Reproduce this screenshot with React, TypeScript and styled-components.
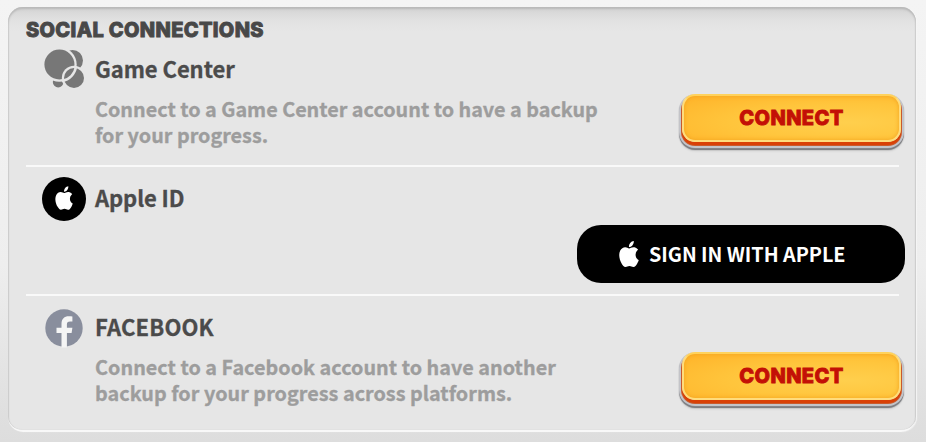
import React from 'react';
import styled, { createGlobalStyle } from 'styled-components';

const GlobalStyle = createGlobalStyle`
  * { box-sizing: border-box; }
  body {
    margin: 0;
    font-family: 'Noto Sans CJK SC', 'Noto Sans', sans-serif;
    font-weight: 700;
  }
`;

const Page = styled.main`
  width: 926px;
  height: 442px;
  padding: 7px 10px 9px 8px;
  background: linear-gradient(#f4f4f4 0%, #eeeeee 60%, #dfdfdf 94%, #dddddd 100%);
`;

const Panel = styled.section`
  display: flex;
  flex-direction: column;
  height: 425px;
  padding: 10px 11px 0 18px;
  border-radius: 15px;
  background: linear-gradient(#d0d0d0 0, #dadada 6px, #e2e2e2 14px, #e6e6e6 24px, #e6e6e6 100%);
  border-bottom: 2px solid #f8f8f8;
  box-shadow: inset 0 2px 2px #b9b9b9, inset 1px 0 1px #d2d2d2, inset -1px 0 1px #d4d4d4, 1px 0 1px #f6f6f6;
`;

const Heading = styled.h1`
  margin: 0;
  height: 27px;
  font: 800 20px/27px Inter, sans-serif;
  letter-spacing: 0.35px;
  color: #484848;
  -webkit-text-stroke: 0.9px #484848;
  white-space: nowrap;
`;

const Row = styled.article<{ $height: number }>`
  display: grid;
  grid-template-columns: 69px 1fr auto;
  grid-template-rows: 51px 1fr;
  height: ${(p) => p.$height}px;

  & + & {
    padding-top: 6px;
    border-top: 2px solid transparent;
    border-image: linear-gradient(90deg, #f9f9f9 0 872px, transparent 872px) 1;
  }
`;

const IconCell = styled.div`
  display: flex;
  align-items: center;
  padding-left: 16px;
  height: 52px;

  svg { display: block; }
`;

const Name = styled.h2<{ $spacing: number }>`
  grid-column: 2 / 4;
  margin: 0;
  font-size: 22px;
  line-height: 49px;
  letter-spacing: ${(p) => p.$spacing}px;
  color: #4b4b4b;
  -webkit-text-stroke: 0.3px #4b4b4b;
  white-space: nowrap;
`;

const Description = styled.p<{ $spacing: number }>`
  grid-column: 2;
  margin: 1px 0 0;
  font-size: 19.8px;
  line-height: 25.5px;
  letter-spacing: ${(p) => p.$spacing}px;
  color: #9d9d9d;
  -webkit-text-stroke: 0.3px #9d9d9d;
  white-space: pre-line;
`;

const ConnectButton = styled.button`
  grid-column: 3;
  width: 219px;
  height: 48px;
  margin: -1px 4px 0 0;
  padding: 0;
  border: 2px solid #ffdc7c;
  border-top-color: #ffd25c;
  border-radius: 13px;
  background: radial-gradient(ellipse at 75% 60%, #ffcf4d 0%, #ffc53c 50%, #ffb329 100%);
  box-shadow: inset 0 0 4px #f2a21f, 0 3px 0 #d94006, 0 3px 0 1px #c95a2b,
    0 3px 0 3px #c3c4c9, 0 5px 0 2px #85868b, 0 5px 1px 3px #77787c, 0 7px 3px 1px #b0b0b0;
  font: 800 20px/44px Inter, sans-serif;
  letter-spacing: 0.4px;
  color: #c31006;
  -webkit-text-stroke: 0.9px #c31006;
`;

const AppleButton = styled.button`
  display: flex;
  align-items: center;
  gap: 8px;
  grid-column: 3;
  width: 328px;
  height: 58px;
  margin: 1px 0 0;
  padding: 0 0 0 40px;
  border: 0;
  border-radius: 24px;
  background: #000;
  font: 700 19.8px/56px 'Noto Sans CJK SC', sans-serif;
  letter-spacing: -0.05px;
  color: #fff;
  white-space: nowrap;
`;

const APPLE_PATH =
  'M12.152 6.896c-.948 0-2.415-1.078-3.96-1.04-2.04.027-3.91 1.183-4.961 3.014-2.117 3.675-.546 9.103 1.519 12.09 1.013 1.454 2.208 3.09 3.792 3.039 1.52-.065 2.09-.987 3.935-.987 1.831 0 2.35.987 3.96.948 1.637-.026 2.676-1.48 3.676-2.948 1.156-1.688 1.636-3.325 1.662-3.415-.039-.013-3.182-1.221-3.22-4.857-.026-3.04 2.48-4.494 2.597-4.559-1.429-2.09-3.623-2.324-4.39-2.376-2-.156-3.675 1.09-4.61 1.09zM15.53 3.83c.843-1.012 1.4-2.427 1.245-3.83-1.207.052-2.662.805-3.532 1.818-.78.896-1.454 2.338-1.273 3.714 1.338.104 2.715-.688 3.559-1.701';

const GameCenterIcon = () => (
  <svg width="44" height="44" viewBox="0 0 44 44">
    <g fill="#777">
      <circle cx="30.5" cy="12.5" r="10.5" />
      <circle cx="16.2" cy="34" r="5.4" />
      <circle cx="17.4" cy="16.5" r="17.3" fill="#e6e6e6" />
      <circle cx="17.4" cy="16.5" r="15" />
      <circle cx="32" cy="30" r="12.2" fill="#e6e6e6" />
      <circle cx="32" cy="30" r="10" />
    </g>
    <path d="M34 18.5A17 17 0 0 1 20 33" fill="none" stroke="#e6e6e6" strokeWidth="2.4" />
  </svg>
);

const AppleIcon = () => (
  <svg width="44" height="44" viewBox="0 0 44 44">
    <circle cx="22" cy="22" r="22" />
    <path d={APPLE_PATH} fill="#fff" transform="translate(11.4 9.3) scale(.89 .98)" />
  </svg>
);

const FacebookIcon = () => (
  <svg width="44" height="44" viewBox="0 0 44 44">
    <circle cx="22" cy="22" r="18.7" fill="#898e9d" />
    <path
      d="M19.5 41.5V27h-5v-5.2h5v-4c0-5 2.9-7.6 7.2-7.6 1.6 0 2.7.1 3.7.3v4.9h-2.2c-2.6 0-3.3 1.3-3.3 3v3.4h5.5l-.8 5.2h-4.7v14.5z"
      fill="#f5f5f5"
    />
  </svg>
);

export default function App() {
  return (
    <Page>
      <GlobalStyle />
      <Panel>
        <Heading>SOCIAL CONNECTIONS</Heading>
        <Row $height={121}>
          <IconCell><GameCenterIcon /></IconCell>
          <Name $spacing={-0.05}>Game Center</Name>
          <Description $spacing={0}>{'Connect to a Game Center account to have a backup\nfor your progress.'}</Description>
          <ConnectButton>CONNECT</ConnectButton>
        </Row>
        <Row $height={129}>
          <IconCell><AppleIcon /></IconCell>
          <Name $spacing={-0.1}>Apple ID</Name>
          <AppleButton>
            <svg width="24" height="26" viewBox="0 0 24 24" preserveAspectRatio="none">
              <path d={APPLE_PATH} fill="#fff" />
            </svg>
            SIGN IN WITH APPLE
          </AppleButton>
        </Row>
        <Row $height={129}>
          <IconCell><FacebookIcon /></IconCell>
          <Name $spacing={0.15}>FACEBOOK</Name>
          <Description $spacing={0.03}>{'Connect to a Facebook account to have another\nbackup for your progress across platforms.'}</Description>
          <ConnectButton>CONNECT</ConnectButton>
        </Row>
      </Panel>
    </Page>
  );
}
